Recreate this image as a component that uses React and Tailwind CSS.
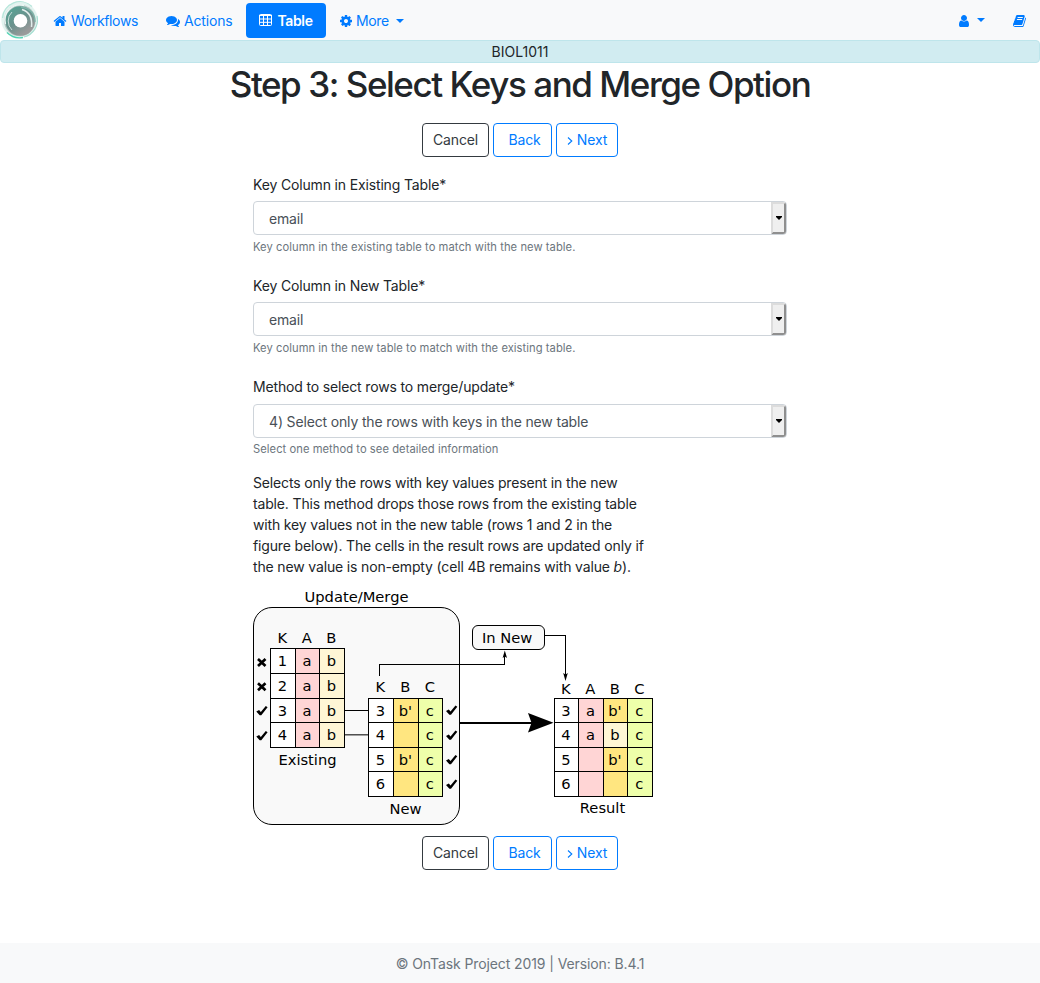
import React from "react";

const ICONS = {
  home: "M1472 992v480q0 26-19 45t-45 19h-384v-384h-256v384h-384q-26 0-45-19t-19-45v-480q0-1 .5-3t.5-3l575-474 575 474q1 2 1 6zm223-69l-62 74q-8 9-21 11h-3q-13 0-21-7l-692-577-692 577q-12 8-24 7-13-2-21-11l-62-74q-8-10-7-23.5t11-21.5l719-599q32-26 76-26t76 26l244 204v-195q0-14 9-23t23-9h192q14 0 23 9t9 23v408l219 182q10 8 11 21.5t-7 23.5z",
  comments:
    "M1408 768q0 139-94 257t-256.5 186.5-353.5 68.5q-86 0-176-16-124 88-278 128-36 9-86 16h-3q-11 0-20.5-8t-11.5-21q-1-3-1-6.5t.5-6.5 2-6l2.5-5 3.5-5.5 4-5 4.5-5 4-4.5q5-6 23-25t26-29.5 22.5-29 25-38.5 20.5-44q-124-72-195-177t-71-224q0-139 94-257t256.5-186.5 353.5-68.5 353.5 68.5 256.5 186.5 94 257zm384 256q0 120-71 224.5t-195 176.5q10 24 20.5 44t25 38.5 22.5 29 26 29.5 23 25q1 1 4 4.5t4.5 5 4 5 3.5 5.5l2.5 5 2 6 .5 6.5-1 6.5q-3 14-13 22t-22 7q-50-7-86-16-154-40-278-128-90 16-176 16-271 0-472-132 58 4 88 4 161 0 309-45t264-129q125-92 192-212t67-254q0-77-23-152 129 71 204 178t75 230z",
  cog: "M1152 896q0-106-75-181t-181-75-181 75-75 181 75 181 181 75 181-75 75-181zm512-109v222q0 12-8 23t-20 13l-185 28q-19 54-39 91 35 50 107 138 10 12 10 25t-9 23q-27 37-99 108t-94 71q-12 0-26-9l-138-108q-44 23-91 38-16 136-29 186-7 28-36 28h-222q-14 0-24.5-8.5t-11.5-21.5l-28-184q-49-16-90-37l-141 107q-10 9-25 9-14 0-25-11-126-114-165-168-7-10-7-23 0-12 8-23 15-21 51-66.5t54-70.5q-27-50-41-99l-183-27q-13-2-21-12.5t-8-23.5v-222q0-12 8-23t19-13l186-28q14-46 39-92-40-57-107-138-10-12-10-24 0-10 9-23 26-36 98.5-107.5t94.5-71.5q13 0 26 10l138 107q44-23 91-38 16-136 29-186 7-28 36-28h222q14 0 24.5 8.5t11.5 21.5l28 184q49 16 90 37l142-107q9-9 24-9 13 0 25 10 129 119 165 170 7 8 7 22 0 12-8 23-15 21-51 66.5t-54 70.5q26 50 41 98l183 28q13 2 21 12.5t8 23.5z",
  user: "M1536 1399q0 109-62.5 187t-150.5 78h-854q-88 0-150.5-78t-62.5-187q0-85 8.5-160.5t31.5-152 58.5-131 94-89 134.5-34.5q131 128 313 128t313-128q76 0 134.5 34.5t94 89 58.5 131 31.5 152 8.5 160.5zm-256-887q0 159-112.5 271.5t-271.5 112.5-271.5-112.5-112.5-271.5 112.5-271.5 271.5-112.5 271.5 112.5 112.5 271.5z",
  book: "M1639 478q40 57 18 129l-275 906q-19 64-76.5 107.5t-122.5 43.5h-923q-77 0-148.5-53.5t-99.5-131.5q-24-67-2-127 0-4 3-27t4-37q1-8-3-21.5t-3-19.5q2-11 8-21t16.5-23.5 16.5-23.5q23-38 45-91.5t30-91.5q3-10 .5-30t-.5-28q3-11 17-28t17-23q21-36 42-92t25-90q1-9-2.5-32t.5-28q4-13 22-30.5t22-22.5q19-26 42.5-84.5t27.5-96.5q1-8-3-25.5t-2-26.5q2-8 9-18t18-23 17-21q8-12 16.5-30.5t15-35 16-36 19.5-32 26.5-23.5 36-11.5 47.5 5.5l-1 3q38-9 51-9h761q74 0 114 56t18 130l-274 906q-36 119-71.5 153.5t-128.5 34.5h-869q-27 0-38 15-11 16-1 43 24 70 144 70h923q29 0 56-15.5t35-41.5l300-987q7-22 5-57 38 15 59 43zm-1064 2q-4 13 2 22.5t20 9.5h608q13 0 25.5-9.5t16.5-22.5l21-64q4-13-2-22.5t-20-9.5h-608q-13 0-25.5 9.5t-16.5 22.5zm-83 256q-4 13 2 22.5t20 9.5h608q13 0 25.5-9.5t16.5-22.5l21-64q4-13-2-22.5t-20-9.5h-608q-13 0-25.5 9.5t-16.5 22.5z",
};

function Icon({ name }) {
  return (
    <svg viewBox="0 0 1792 1792" className="mt-px size-[14px] shrink-0 fill-current">
      <path d={ICONS[name]} />
    </svg>
  );
}

function TableIcon() {
  return (
    <svg viewBox="0 0 13 12" className="mr-[5px] h-3 w-[13px] shrink-0">
      <rect x="0.5" y="0.5" width="12" height="11" rx="1" fill="none" stroke="#fff" />
      <path d="M0 1.5h13M0 5h13M0 8.3h13M4.5 1v11M8.5 1v11" stroke="#fff" fill="none" />
    </svg>
  );
}

function Caret() {
  return (
    <span className="h-0 w-0 border-x-4 border-t-4 border-x-transparent border-t-current" />
  );
}

function Logo() {
  return (
    <div className="h-10 w-10 shrink-0 bg-white">
      <svg viewBox="0 0 40 40" className="size-10">
        <defs>
          <linearGradient id="ring" x1="0.1" y1="0" x2="0.8" y2="1">
            <stop offset="0" stopColor="#5aa093" />
            <stop offset="0.5" stopColor="#6b928d" />
            <stop offset="1" stopColor="#999a9a" />
          </linearGradient>
        </defs>
        <circle cx="19.5" cy="19.800" r="18.200" fill="#e2f3ef" />
        <circle cx="19.800" cy="20.500" r="15.800" fill="#b4c6c3" />
        <circle cx="20.200" cy="21" r="10.5" fill="none" stroke="url(#ring)" strokeWidth="8.500" />
        <path d="M2.500 18A17.500 17.500 0 0 1 32 6.500" fill="none" stroke="#b5e6da" strokeWidth="1.200" />
        <path d="M7 32.500A18 18 0 0 0 23 37.500" fill="none" stroke="#52d3b3" strokeWidth="1.300" />
        <path d="M24 37A17.500 17.500 0 0 0 37 16" fill="none" stroke="#a6dfd1" strokeWidth="1.200" />
        <path d="M5.500 24A15 15 0 0 1 24 5.500" fill="none" stroke="#eef8f6" strokeWidth="1.300" />
        <path d="M12 12A12.500 12.500 0 0 0 12 30" fill="none" stroke="#c6dcd8" strokeWidth="1" />
        <path d="M22 9.500Q33 13 31.500 27" fill="none" stroke="#e3eeec" strokeWidth="1.500" />
        <path d="M21 7Q35 9 35 22" fill="none" stroke="#7fb5aa" strokeWidth="1.300" />
        <circle cx="20.500" cy="20.800" r="6.800" fill="#fff" />
      </svg>
    </div>
  );
}

function Actions() {
  return (
    <div className="flex justify-center gap-1 text-[14px] leading-[21px]">
      <button className="flex h-[34px] w-[67px] items-center justify-center rounded-[4px] border border-[#343a40] pb-[2px] tracking-[-0.155px] text-[#343a40]">
        Cancel
      </button>
      <button className="flex h-[34px] w-[59px] items-center justify-center rounded-[4px] border border-[#007bff] pb-[2px] pl-1 tracking-[-0.155px] text-[#007bff]">
        Back
      </button>
      <button className="flex h-[34px] w-[62px] items-center justify-center gap-1 rounded-[4px] border border-[#007bff] pb-[2px] tracking-[-0.155px] text-[#007bff]">
        <svg viewBox="0 0 6 8" className="mt-[3px] h-2 w-[6px]">
          <path d="M1 0.500L4.800 4L1 7.500" fill="none" stroke="currentColor" strokeWidth="1.100" />
        </svg>
        Next
      </button>
    </div>
  );
}

function Field({ label, value, help }) {
  return (
    <div className="flex h-[101.300px] flex-col">
      <label className="mb-[6.500px] leading-[21px]">{label}</label>
      <div className="flex h-[34px] items-stretch justify-between rounded-[4px] border border-[#ced4da] pl-[15px] text-[#495057]">
        <span className="leading-[33px]">{value}</span>
        <span className="flex w-[15px] items-center justify-center rounded-r-[3px] border-2 border-t-[#dcdcdc] border-r-[#8f8f8f] border-b-[#8f8f8f] border-l-[#dcdcdc] bg-[#efefef]">
          <svg viewBox="0 0 6 4" className="h-1 w-[6px]">
            <path d="M0 0H6V1L3 4L0 1Z" fill="#000" />
          </svg>
        </span>
      </div>
      <small className="mt-[3.500px] text-[11.200px] leading-[17px] tracking-[0.050px] text-[#6c757d]">{help}</small>
    </div>
  );
}

const WHITE = "#fff";
const PINK = "#ffd5d5";
const CREAM = "#fff6d5";
const AMBER = "#ffe680";
const LIME = "#eeffaa";

function Grid({ xs, ys, heads, headY, rows }) {
  return (
    <g>
      {heads.map((h, i) => (
        <text key={h} x={(xs[i] + xs[i + 1]) / 2 - 0.6} y={headY} textAnchor="middle">
          {h}
        </text>
      ))}
      {rows.map((row, r) =>
        row.map(([text, fill], c) => (
          <g key={r + "-" + c}>
            <rect
              x={xs[c]}
              y={ys[r]}
              width={xs[c + 1] - xs[c]}
              height={ys[r + 1] - ys[r]}
              fill={fill}
              stroke="#000"
              shapeRendering="crispEdges"
            />
            <text x={(xs[c] + xs[c + 1]) / 2 - 0.6} y={ys[r] + 17.4} textAnchor="middle">
              {text}
            </text>
          </g>
        ))
      )}
    </g>
  );
}

function Check({ x, y }) {
  return (
    <path
      transform={`translate(${x} ${y})`}
      d="M0 5.500L2.800 4L4.500 6L9.500 0L11.300 1.200L5 9.300L3.400 9.300Z"
    />
  );
}

function Cross({ x, y }) {
  return (
    <path
      transform={`translate(${x} ${y})`}
      d="M1 1L8.500 8M8.500 1L1 8"
      stroke="#000"
      strokeWidth="2.700"
      fill="none"
    />
  );
}

function MergeDiagram() {
  const lowerY = [698.5, 722.5, 747.5, 771.5, 796.5];
  return (
    <svg
      viewBox="253 586 400 240"
      className="block h-[240px] w-[400px] font-['DejaVu_Sans',sans-serif] text-[14.700px] tracking-normal"
      fill="#000"
    >
      <text x="356.500" y="602" textAnchor="middle">Update/Merge</text>
      <rect x="253.500" y="607.500" width="206" height="217" rx="18.500" fill="#f9f9f9" stroke="#000" />
      <path d="M344 710.500h25" stroke="#000" shapeRendering="crispEdges" />
      <path d="M344 734.800h25" stroke="#333" strokeWidth="1.300" />
      <Grid
        xs={[270.5, 295.5, 319.5, 344.5]}
        ys={[648.5, 673.5, 698.5, 722.5, 747.5]}
        heads={["K", "A", "B"]}
        headY={643}
        rows={["1", "2", "3", "4"].map((k) => [[k, WHITE], ["a", PINK], ["b", CREAM]])}
      />
      <text x="307.500" y="765" textAnchor="middle">Existing</text>
      <Grid
        xs={[368.5, 393.5, 418.5, 442.5]}
        ys={lowerY}
        heads={["K", "B", "C"]}
        headY={692}
        rows={[
          [["3", WHITE], ["b'", AMBER], ["c", LIME]],
          [["4", WHITE], ["", AMBER], ["c", LIME]],
          [["5", WHITE], ["b'", AMBER], ["c", LIME]],
          [["6", WHITE], ["", AMBER], ["c", LIME]],
        ]}
      />
      <text x="405.500" y="814" textAnchor="middle">New</text>
      <Cross x={257} y={658} />
      <Cross x={257} y={682.3} />
      <Check x={256.3} y={706} />
      <Check x={256.3} y={731} />
      <Check x={446} y={705.5} />
      <Check x={446} y={730.5} />
      <Check x={446} y={755} />
      <Check x={446} y={779.5} />
      <path d="M379.500 676V664.500H504.500V653" fill="none" stroke="#000" shapeRendering="crispEdges" />
      <path d="M504.800 650.500l2.200 7.500-2.200-1.500-2.200 1.500z" />
      <rect x="472.500" y="625.500" width="72" height="24" rx="5.500" fill="#f9f9f9" stroke="#000" />
      <text x="507.200" y="643" textAnchor="middle">In New</text>
      <path d="M545 635.500H565.500V679" fill="none" stroke="#000" shapeRendering="crispEdges" />
      <path d="M565.500 681l2.300-8-2.300 1.500-2.300-1.500z" />
      <path d="M460 723H535" stroke="#000" strokeWidth="2" shapeRendering="crispEdges" />
      <path d="M553.500 722.700L528 713L531.500 722.700L528 732.500Z" />
      <Grid
        xs={[554.5, 578.5, 603.5, 627.5, 652.5]}
        ys={lowerY}
        heads={["K", "A", "B", "C"]}
        headY={694}
        rows={[
          [["3", WHITE], ["a", PINK], ["b'", AMBER], ["c", LIME]],
          [["4", WHITE], ["a", PINK], ["b", CREAM], ["c", LIME]],
          [["5", WHITE], ["", PINK], ["b'", AMBER], ["c", LIME]],
          [["6", WHITE], ["", PINK], ["", AMBER], ["c", LIME]],
        ]}
      />
      <text x="602.500" y="813" textAnchor="middle">Result</text>
    </svg>
  );
}

export default function App() {
  return (
    <div className="flex h-[983px] w-[1040px] flex-col bg-white font-[Inter,sans-serif] text-[14px] leading-[21px] tracking-[-0.155px] text-[#212529]">
      <nav className="flex h-10 shrink-0 items-center bg-[#f8f9fa] text-[#007bff]">
        <Logo />
        <a className="ml-[13px] flex w-[86px] items-center gap-1 pt-px tracking-[-0.350px]"><Icon name="home" />Workflows</a>
        <a className="ml-[27px] flex w-[67px] items-center gap-1 pt-px"><Icon name="comments" />Actions</a>
        <a className="ml-[13px] flex h-[35px] w-20 items-center justify-center rounded-[4px] bg-[#007bff] font-semibold tracking-[-0.350px] text-white">
          <TableIcon />Table
        </a>
        <a className="ml-[13px] flex items-center pt-px tracking-[-0.400px]"><Icon name="cog" /><span className="mr-[7px] ml-[3px]">More</span><Caret /></a>
        <div className="ml-auto flex items-center pr-[13px]">
          <Icon name="user" />
          <span className="mr-7 ml-[6px] flex"><Caret /></span>
          <Icon name="book" />
        </div>
      </nav>
      <div className="flex h-[23px] shrink-0 items-center justify-center rounded-[4px] border border-[#bee5eb] bg-[#d1ecf1] tracking-normal">
        BIOL1011
      </div>
      <h1 className="text-center text-[35px] leading-[42px] font-medium tracking-[-1.450px]">
        Step 3: Select Keys and Merge Option
      </h1>
      <div className="mt-[18px]"><Actions /></div>
      <main className="mx-auto mt-[16.500px] w-[534px]">
        <Field
          label="Key Column in Existing Table*"
          value="email"
          help="Key column in the existing table to match with the new table."
        />
        <Field
          label="Key Column in New Table*"
          value="email"
          help="Key column in the new table to match with the existing table."
        />
        <Field
          label="Method to select rows to merge/update*"
          value="4) Select only the rows with keys in the new table"
          help="Select one method to see detailed information"
        />
        <p className="-mt-[5px] whitespace-nowrap">
          Selects only the rows with key values present in the new<br />
          table. This method drops those rows from the existing table<br />
          with key values not in the new table (rows 1 and 2 in the<br />
          figure below). The cells in the result rows are updated only if<br />
          the new value is non-empty (cell 4B remains with value <em>b</em>).
        </p>
        <div className="mt-[9px]"><MergeDiagram /></div>
      </main>
      <div className="mt-[10px]"><Actions /></div>
      <footer className="mt-auto flex h-10 shrink-0 items-center justify-center bg-[#f8f9fa] pt-px tracking-[-0.100px] text-[#6c757d]">
        © OnTask Project 2019 | Version: B.4.1
      </footer>
    </div>
  );
}
